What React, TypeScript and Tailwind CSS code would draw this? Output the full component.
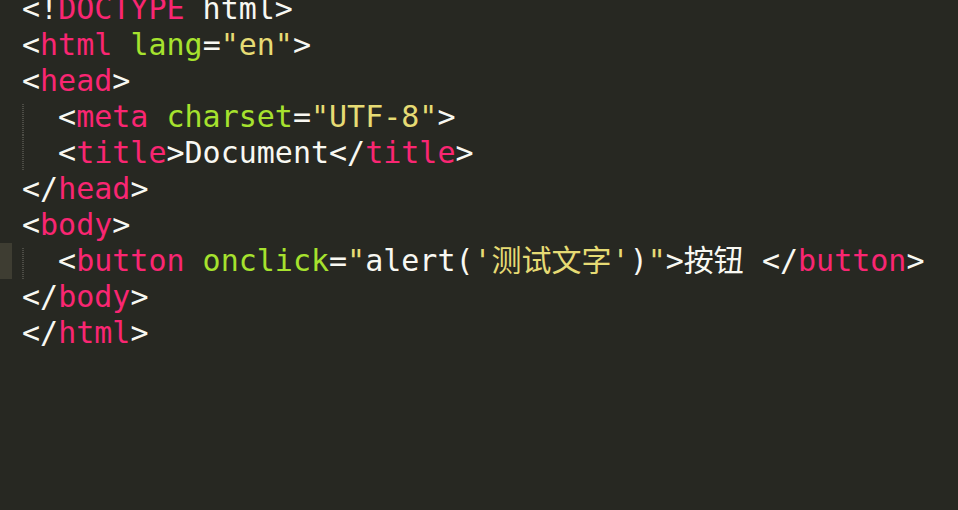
type Tok = [string, string];

const W = "text-[#f8f8f2]";
const P = "text-[#f92672]";
const G = "text-[#a6e22e]";
const Y = "text-[#e6db74]";

const lines: { indent: boolean; first?: boolean; toks: Tok[] }[] = [
  { indent: false, toks: [["<!", W], ["DOCTYPE", P], [" html>", W]] },
  { indent: false, toks: [["<", W], ["html", P], [" ", W], ["lang", G], ["=", W], ['"en"', Y], [">", W]] },
  { indent: false, toks: [["<", W], ["head", P], [">", W]] },
  {
    indent: true,
    first: true,
    toks: [["<", W], ["meta", P], [" ", W], ["charset", G], ["=", W], ['"UTF-8"', Y], [">", W]],
  },
  { indent: true, toks: [["<", W], ["title", P], [">Document</", W], ["title", P], [">", W]] },
  { indent: false, toks: [["</", W], ["head", P], [">", W]] },
  { indent: false, toks: [["<", W], ["body", P], [">", W]] },
  {
    indent: true,
    first: true,
    toks: [
      ["<", W],
      ["button", P],
      [" ", W],
      ["onclick", G],
      ["=", W],
      ['"', Y],
      ["alert(", W],
      ["'测试文字'", Y],
      [")", W],
      ['"', Y],
      [">按钮 </", W],
      ["button", P],
      [">", W],
    ],
  },
  { indent: false, toks: [["</", W], ["body", P], [">", W]] },
  { indent: false, toks: [["</", W], ["html", P], [">", W]] },
];

function App() {
  return (
    <div className="w-full h-[510px] overflow-hidden bg-[#272822] font-['DejaVu_Sans_Mono','Noto_Sans_CJK_SC',monospace] text-[30px] leading-[36px]">
      <div className="flex -mt-[9px]">
        {/* gutter */}
        <div className="flex flex-col w-[12px] shrink-0">
          {lines.map((_, i) => (
            <div key={i} className={i === 7 ? "h-[36px] bg-[#3e3d32]" : "h-[36px]"} />
          ))}
        </div>
        {/* code */}
        <div className="flex flex-col pl-[10px]">
          {lines.map((line, i) => (
            <div key={i} className="flex h-[36px] whitespace-pre">
              {line.indent && (
                <div className={line.first ? "w-[2ch] shrink-0 pt-[5px]" : "w-[2ch] shrink-0"}>
                  <div className="w-[2px] h-full bg-[repeating-linear-gradient(to_bottom,#4d4d46_0_1px,transparent_1px_2px)]" />
                </div>
              )}
              <span>
                {line.toks.map(([t, c], j) => (
                  <span key={j} className={c}>
                    {t}
                  </span>
                ))}
              </span>
            </div>
          ))}
        </div>
      </div>
    </div>
  );
}

export default App;
